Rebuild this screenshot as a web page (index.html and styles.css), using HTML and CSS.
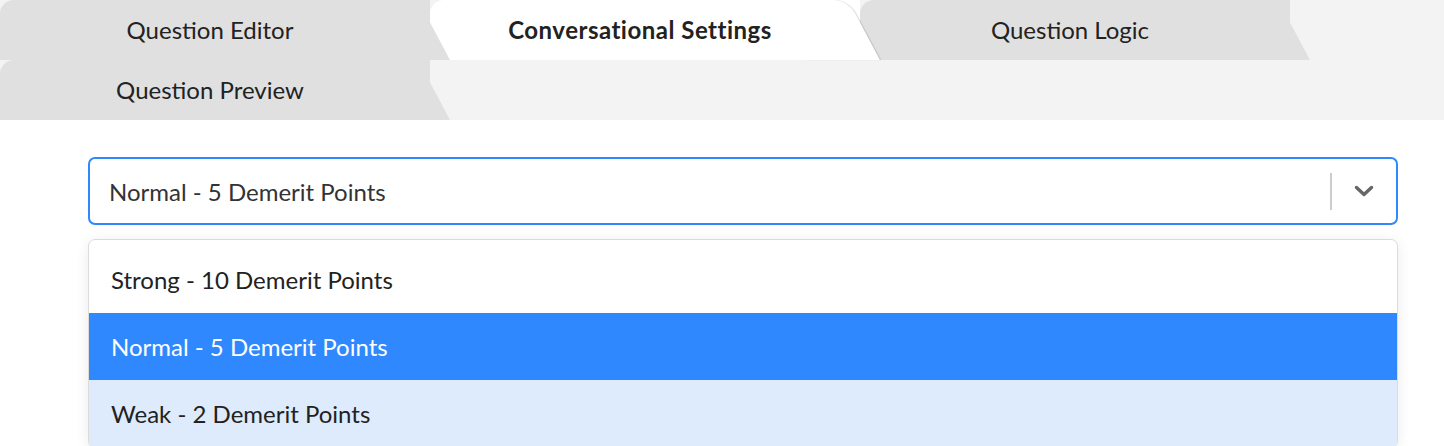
FILE: index.html
```html
<!DOCTYPE html>
<html lang="en">
<head>
<meta charset="utf-8">
<title>Conversational Settings</title>
<link rel="stylesheet" href="styles.css">
</head>
<body>
  <nav class="tabs">
    <div class="tab tab-1">Question Editor</div>
    <div class="tab tab-2 tab-active">Conversational Settings</div>
    <div class="tab tab-3">Question Logic</div>
    <div class="tab tab-4">Question Preview</div>
  </nav>
  <main class="content">
    <div class="select">
      <div class="select-value">Normal - 5 Demerit Points</div>
      <div class="select-indicators">
        <span class="select-sep"></span>
        <svg class="chevron" width="24" height="24" viewBox="0 0 24 24">
          <path d="M4.5 8.5 L12 15.5 L19.5 8.5" fill="none" stroke="#666" stroke-width="3.4" stroke-linecap="round" stroke-linejoin="round"/>
        </svg>
      </div>
    </div>
    <ul class="menu">
      <li class="option">Strong - 10 Demerit Points</li>
      <li class="option option-selected">Normal - 5 Demerit Points</li>
      <li class="option option-focused">Weak - 2 Demerit Points</li>
    </ul>
  </main>
</body>
</html>
```

FILE: styles.css
```css
* { box-sizing: border-box; }
html, body {
  margin: 0;
  padding: 0;
  background: #ffffff;
  font-family: "Lato", "Open Sans", "Liberation Sans", sans-serif;
  color: #212529;
  overflow: hidden;
}
.tabs {
  display: flex;
  flex-wrap: wrap;
  width: 1444px;
  height: 120px;
  background: #f3f3f3;
}
.tab {
  position: relative;
  width: 430px;
  height: 60px;
  background: #e0e0e0;
  border-top-left-radius: 14px;
  display: flex;
  align-items: center;
  justify-content: center;
  padding: 0 10px 2px 0;
  font-size: 24px;
  color: #222;
}
.tab::after {
  content: "";
  position: absolute;
  top: 0;
  left: 378px;
  width: 72px;
  height: 60px;
  background: inherit;
  transform: skewX(28deg);
  transform-origin: bottom left;
  border-top-right-radius: 14px;
  z-index: 2;
}
.tab-active {
  background: #ffffff;
  font-weight: 700;
  letter-spacing: 0.5px;
}
.tab-active::after {
  box-shadow: 1px 0 1px rgba(0, 0, 0, 0.16);
}
.content {
  padding: 37px 46px 0 88px;
}
.select {
  display: flex;
  align-items: center;
  height: 68px;
  border: 2px solid #2f88fd;
  border-radius: 7px;
  background: #fff;
}
.select-value {
  flex: 1;
  padding-left: 19px;
  font-size: 24px;
  color: #333;
}
.select-indicators {
  display: flex;
  align-items: center;
  height: 100%;
}
.select-sep {
  width: 2px;
  height: 37px;
  background: #cccccc;
}
.chevron {
  margin: 0 20px 0 20px;
  display: block;
}
.menu {
  list-style: none;
  margin: 14px 0 0 0;
  padding: 6px 0 0 0;
  border: 1px solid #dcdcdc;
  border-radius: 7px;
  background: #fff;
  box-shadow: 0 2px 14px rgba(0, 0, 0, 0.08);
  overflow: hidden;
}
.option {
  height: 67px;
  display: flex;
  align-items: center;
  padding-left: 22px;
  font-size: 24px;
  color: #222;
}
.option-selected {
  background: #2f88fd;
  color: #ffffff;
}
.option-focused {
  background: #deebfc;
}
```
